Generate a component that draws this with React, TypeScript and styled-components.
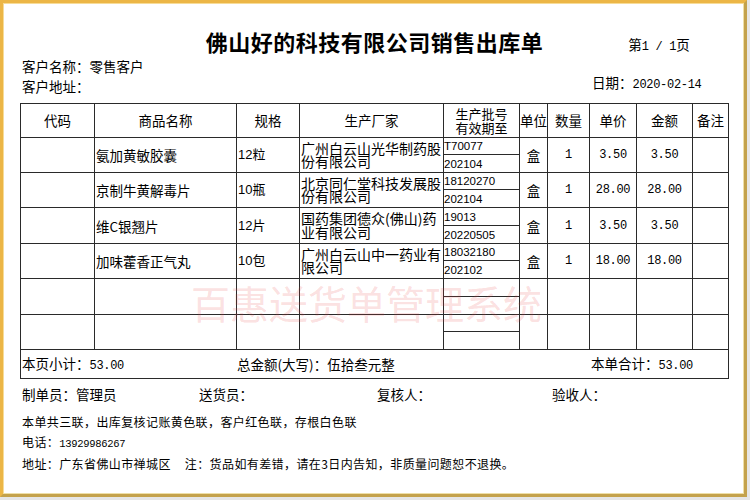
import React from "react";
import styled, { createGlobalStyle } from "styled-components";

const LINE = "#2a2a2a";
const CJK = `"Noto Sans CJK SC", sans-serif`;
const MONO = `"Liberation Mono", "Noto Sans CJK SC", monospace`;

const GlobalStyle = createGlobalStyle`
  html, body { margin: 0; padding: 0; background: #e6e6e6; }
  body { font-family: ${CJK}; color: #000; }
`;

const Frame = styled.div`
  width: 747px;
  height: 497px;
  box-sizing: border-box;
  background: #fff;
  border: 3px solid #ecb646;
  border-right-color: #c4a24c;
  border-bottom-color: #c4a24c;
  box-shadow: inset 1px 1px 0 #f7dc98, inset -1px -1px 0 #eedfa8;
  padding: 25px 0 0 17px;
`;

const TitleRow = styled.div`
  width: 709px;
  height: 26px;
  display: grid;
  grid-template-columns: 1fr auto 1fr;
  align-items: end;
`;

const Title = styled.h1`
  grid-column: 2;
  margin: 0;
  font-family: ${CJK};
  font-size: 22px;
  font-weight: 700;
  line-height: 26px;
  letter-spacing: 0.5px;
  white-space: nowrap;
`;

const PageNo = styled.div`
  grid-column: 3;
  justify-self: start;
  margin-left: 85px;
  font-size: 13.5px;
  line-height: 18px;
  margin-bottom: -2px;
  white-space: pre;
`;

const Num = styled.span<{ $size?: number }>`
  font-family: ${MONO};
  font-size: ${(p) => p.$size ?? 12}px;
  letter-spacing: -0.3px;
  white-space: pre;
`;

const InfoBlock = styled.div`
  margin-top: 2px;
  width: 709px;
  display: grid;
  grid-template-columns: 572px 1fr;
`;

const InfoLines = styled.div`
  padding-left: 2px;
  font-size: 13.5px;
  line-height: 20px;
`;

const DateLine = styled.div`
  margin-top: 16px;
  font-size: 13.5px;
  line-height: 20px;
  white-space: nowrap;
`;

const ROWS = [35, 35, 36, 35, 36, 35];
const subRows = ROWS.map((h) => `${Math.floor(h / 2)}px ${h - Math.floor(h / 2)}px`).join(" ");

const Grid = styled.div`
  position: relative;
  margin-top: 7px;
  width: 709px;
  box-sizing: border-box;
  display: grid;
  grid-template-columns: 74px 142px 63px 144px 76px 28px 42px 47px 56px 36px;
  grid-template-rows: 34px ${subRows} 29px;
  border-left: 1px solid ${LINE};
  border-top: 1px solid ${LINE};
`;

const Cell = styled.div<{ $span?: number; $left?: boolean }>`
  grid-row: span ${(p) => p.$span ?? 2};
  box-sizing: border-box;
  min-width: 0;
  border-right: 1px solid ${LINE};
  border-bottom: 1px solid ${LINE};
  display: flex;
  align-items: center;
  justify-content: ${(p) => (p.$left ? "flex-start" : "center")};
  padding: 0 1px;
  font-size: 13.5px;
  line-height: 16px;
  white-space: nowrap;
  overflow: hidden;
`;

const HeadCell = styled(Cell)`
  text-align: center;
  padding: 0;
  line-height: 14.5px;
  white-space: pre;
`;

const HeadTwoLine = styled.span`
  font-size: 13px;
  line-height: 14px;
`;

const SpecCell = styled(Cell)`
  font-family: "Liberation Sans", ${CJK};
  font-size: 13px;
`;

const MakerCell = styled(Cell)`
  font-size: 14px;
  line-height: 13.5px;
  white-space: normal;
  word-break: break-all;
  padding: 0 0 0 1px;
`;

const BatchCell = styled(Cell)`
  font-family: "Liberation Sans", ${CJK};
  font-size: 11.5px;
  line-height: 14px;
  padding: 0;
`;

const SummaryCell = styled.div`
  grid-column: 1 / -1;
  box-sizing: border-box;
  border-right: 1px solid ${LINE};
  border-bottom: 1px solid ${LINE};
  display: grid;
  grid-template-columns: 215px 354px 1fr;
  align-items: center;
  padding-left: 1px;
  font-size: 13.5px;
  line-height: 18px;
  white-space: nowrap;
`;

const Watermark = styled.div`
  position: absolute;
  left: 170px;
  top: 179px;
  font-family: ${CJK};
  font-size: 39px;
  line-height: 1;
  color: rgba(235, 70, 70, 0.18);
  white-space: nowrap;
  pointer-events: none;
`;

const SignRow = styled.div`
  margin-top: 5px;
  padding-left: 2px;
  display: grid;
  grid-template-columns: 177px 178px 175px 1fr;
  font-size: 13.5px;
  line-height: 20px;
  white-space: nowrap;
`;

const Notes = styled.div`
  margin-top: 8px;
  padding-left: 2px;
  font-size: 12px;
  letter-spacing: 0.4px;
  line-height: 20px;
  white-space: nowrap;
`;

const Gap = styled.span`
  display: inline-block;
  width: 14px;
`;

type Item = {
  name: string;
  spec: string;
  maker: string;
  batch: string;
  expiry: string;
  unit: string;
  qty: string;
  price: string;
  amount: string;
};

const blank: Item = { name: "", spec: "", maker: "", batch: "", expiry: "", unit: "", qty: "", price: "", amount: "" };

const items: Item[] = [
  { name: "氨加黄敏胶囊", spec: "12粒", maker: "广州白云山光华制药股份有限公司", batch: "T70077", expiry: "202104", unit: "盒", qty: "1", price: "3.50", amount: "3.50" },
  { name: "京制牛黄解毒片", spec: "10瓶", maker: "北京同仁堂科技发展股份有限公司", batch: "18120270", expiry: "202104", unit: "盒", qty: "1", price: "28.00", amount: "28.00" },
  { name: "维C银翘片", spec: "12片", maker: "国药集团德众(佛山)药业有限公司", batch: "19013", expiry: "20220505", unit: "盒", qty: "1", price: "3.50", amount: "3.50" },
  { name: "加味藿香正气丸", spec: "10包", maker: "广州白云山中一药业有限公司", batch: "18032180", expiry: "202102", unit: "盒", qty: "1", price: "18.00", amount: "18.00" },
  blank,
  blank,
];

const headers = ["代码", "商品名称", "规格", "生产厂家", "生产批号\n有效期至", "单位", "数量", "单价", "金额", "备注"];

export default function App() {
  return (
    <>
      <GlobalStyle />
      <Frame>
        <TitleRow>
          <Title>佛山好的科技有限公司销售出库单</Title>
          <PageNo>
            第<Num>1 / 1</Num>页
          </PageNo>
        </TitleRow>
        <InfoBlock>
          <InfoLines>
            <div>客户名称：零售客户</div>
            <div>客户地址：</div>
          </InfoLines>
          <DateLine>
            日期：<Num>2020-02-14</Num>
          </DateLine>
        </InfoBlock>
        <Grid>
          {headers.map((h) => (
            <HeadCell key={h} $span={1}>
              {h.includes("\n") ? <HeadTwoLine>{h}</HeadTwoLine> : h}
            </HeadCell>
          ))}
          {items.map((it, i) => (
            <React.Fragment key={i}>
              <Cell />
              <Cell $left>{it.name}</Cell>
              <SpecCell $left>{it.spec}</SpecCell>
              <MakerCell $left>{it.maker}</MakerCell>
              <BatchCell $span={1} $left>{it.batch}</BatchCell>
              <Cell>{it.unit}</Cell>
              <Cell>
                <Num>{it.qty}</Num>
              </Cell>
              <Cell>
                <Num>{it.price}</Num>
              </Cell>
              <Cell>
                <Num>{it.amount}</Num>
              </Cell>
              <Cell />
              <BatchCell $span={1} $left>{it.expiry}</BatchCell>
            </React.Fragment>
          ))}
          <SummaryCell>
            <span>
              本页小计：<Num>53.00</Num>
            </span>
            <span>总金额(大写)：伍拾叁元整</span>
            <span>
              本单合计：<Num>53.00</Num>
            </span>
          </SummaryCell>
          <Watermark>百惠送货单管理系统</Watermark>
        </Grid>
        <SignRow>
          <span>制单员：管理员</span>
          <span>送货员：</span>
          <span>复核人：</span>
          <span>验收人：</span>
        </SignRow>
        <Notes>
          <div>本单共三联，出库复核记账黄色联，客户红色联，存根白色联</div>
          <div>
            电话：<Num $size={10.5}>13929986267</Num>
          </div>
          <div>
            地址：广东省佛山市禅城区<Gap />注：货品如有差错，请在3日内告知，非质量问题恕不退换。
          </div>
        </Notes>
      </Frame>
    </>
  );
}
